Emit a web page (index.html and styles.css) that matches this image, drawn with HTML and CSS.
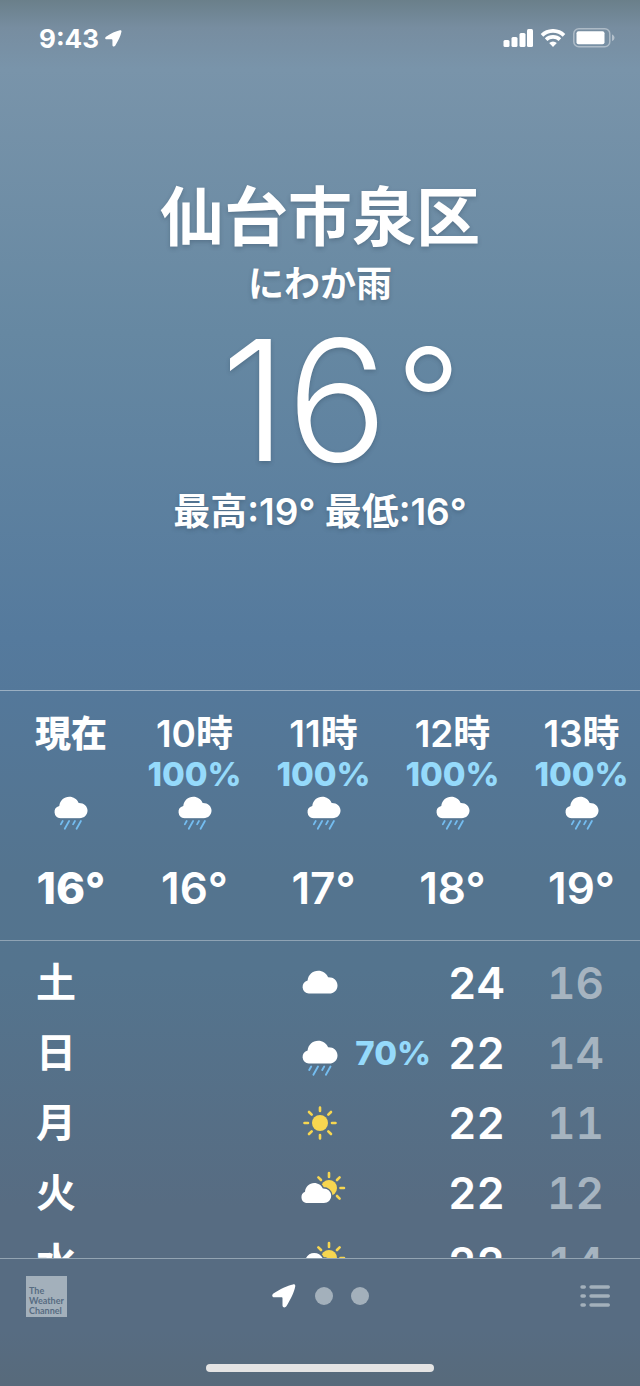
FILE: index.html
```html
<!DOCTYPE html>
<html lang="ja">
<head>
<meta charset="utf-8">
<meta name="viewport" content="width=device-width, initial-scale=1">
<title>天気</title>
<link rel="stylesheet" href="styles.css">
</head>
<body>
<svg class="sprite" aria-hidden="true">
  <symbol id="cloud" viewBox="0 0 36 24">
    <path d="M6.800 23.500A6.600 6.600 0 0 1 5.600 10.500C6.200 4.800 10.600.8 16.200.8c4.400 0 8.200 2.500 9.900 6.500 5.400-.2 9.400 3.400 9.400 8.100 0 4.700-3.600 8.100-8.300 8.100z" fill="#fff"/>
  </symbol>
  <symbol id="rain" viewBox="0 0 36 36">
    <use href="#cloud" width="36" height="24"/>
    <path d="M9.200 26.500l-2 3.500M16 26.500l-4.600 8.200M22.200 26.500l-2 3.500M28.500 26.500l-4.600 8.200" fill="none" stroke="#74bdf0" stroke-width="1.900" stroke-linecap="round"/>
  </symbol>
  <symbol id="sun" viewBox="0 0 36 36">
    <circle cx="18" cy="18" r="8" fill="#f7d650"/>
    <path d="M18 2.500v3.500M18 30v3.500M2.500 18h3.500M30 18h3.500M7 7l2.700 2.700M26.300 26.300l2.700 2.700M29 7l-2.700 2.700M9.700 26.300L7 29" fill="none" stroke="#f7d650" stroke-width="2.600" stroke-linecap="round"/>
  </symbol>
  <symbol id="partly" viewBox="0 0 46 34">
    <mask id="cut" maskUnits="userSpaceOnUse" x="0" y="0" width="46" height="34">
      <rect width="46" height="34" fill="#fff"/>
      <path d="M6 32A6 6 0 0 1 5 20.700C5.500 15.500 9.300 12 14.200 12c3.900 0 7.200 2.200 8.700 5.600 4.700-.2 8.300 3 8.300 7.200 0 4.100-3.200 7.200-7.300 7.200z" fill="#000" stroke="#000" stroke-width="3"/>
    </mask>
    <g mask="url(#cut)">
      <circle cx="29" cy="17" r="8" fill="#f7d650"/>
      <path d="M29 2v4M40.500 17H44M18.400 6.400l2.600 2.600M39.600 6.400L37 9M37 25l2.600 2.600" fill="none" stroke="#f7d650" stroke-width="2.600" stroke-linecap="round"/>
    </g>
    <path d="M6 32A6 6 0 0 1 5 20.700C5.500 15.500 9.300 12 14.200 12c3.900 0 7.200 2.200 8.700 5.600 4.700-.2 8.300 3 8.300 7.200 0 4.100-3.200 7.200-7.300 7.200z" fill="#fff"/>
  </symbol>
  <symbol id="arrow" viewBox="0 0 24 24">
    <path d="M21 .4c1.700-.4 2.600.6 2.200 2.200-1 5.600-4.600 13-8.800 19.700-1.100 1.800-3.900 1.300-3.900-.8V14.300c0-.8-.3-1.100-1.100-1.100H2.200C0 13.200-.5 10.700 1.400 9.500 8 5.200 15.400 1.500 21 .4z" fill="#fff"/>
  </symbol>
</svg>

<div class="app">
  <header class="status">
    <div class="status-time"><time>9:43</time><svg class="status-arrow" role="img" aria-label="位置情報"><use href="#arrow"/></svg></div>
    <div class="status-icons">
      <svg width="30" height="18" viewBox="0 0 30 18" fill="#fff" role="img" aria-label="電波">
        <rect x="0.500" y="11" width="6" height="7" rx="1.500"/><rect x="8.500" y="8" width="6" height="10" rx="1.500"/><rect x="16.500" y="4" width="6" height="14" rx="1.500"/><rect x="24" y="0" width="6" height="18" rx="1.500"/>
      </svg>
      <svg width="26" height="18" viewBox="0 0 26 18" role="img" aria-label="Wi-Fi">
        <path d="M2 6.300a15.800 15.800 0 0 1 22 0M6.100 10.600a9.900 9.900 0 0 1 13.800 0" fill="none" stroke="#fff" stroke-width="3.700"/>
        <path d="M9.200 14a5.500 5.500 0 0 1 7.600 0L13 18z" fill="#fff"/>
      </svg>
      <svg width="42" height="20" viewBox="0 0 42 20" role="img" aria-label="バッテリー">
        <rect x=".8" y=".8" width="36" height="18" rx="5" fill="none" stroke="#fff" stroke-opacity=".4" stroke-width="1.500"/>
        <rect x="3.500" y="3.300" width="28" height="13" rx="2" fill="#fff"/>
        <path d="M39 6.500c3.300 1.300 3.300 5.300 0 6.600z" fill="#fff" fill-opacity=".45"/>
      </svg>
    </div>
  </header>

  <main class="main">
    <section class="current">
      <h1 class="city">仙台市泉区</h1>
      <p class="condition">にわか雨</p>
      <p class="temperature"><span>16</span><span class="degree">°</span></p>
      <p class="range">最高:19° 最低:16°</p>
    </section>

    <ul class="hourly">
      <li class="hour hour-now"><span class="hour-label">現在</span><span class="chance"></span><svg class="hour-icon"><use href="#rain"/></svg><span class="hour-temp">16°</span></li>
      <li class="hour"><span class="hour-label">10時</span><span class="chance">100%</span><svg class="hour-icon"><use href="#rain"/></svg><span class="hour-temp">16°</span></li>
      <li class="hour"><span class="hour-label">11時</span><span class="chance">100%</span><svg class="hour-icon"><use href="#rain"/></svg><span class="hour-temp">17°</span></li>
      <li class="hour"><span class="hour-label">12時</span><span class="chance">100%</span><svg class="hour-icon"><use href="#rain"/></svg><span class="hour-temp">18°</span></li>
      <li class="hour"><span class="hour-label">13時</span><span class="chance">100%</span><svg class="hour-icon"><use href="#rain"/></svg><span class="hour-temp">19°</span></li>
    </ul>

    <div class="daily">
      <table class="days">
        <colgroup><col class="col-day"><col class="col-icon"><col class="col-chance"><col class="col-high"><col class="col-low"></colgroup>
        <tbody>
          <tr><th class="day" scope="row">土</th><td><svg class="icon-cloud" role="img" aria-label="くもり"><use href="#cloud"/></svg></td><td class="chance"></td><td class="high">24</td><td class="low">16</td></tr>
          <tr><th class="day" scope="row">日</th><td><svg class="icon-rain" role="img" aria-label="雨"><use href="#rain"/></svg></td><td class="chance">70%</td><td class="high">22</td><td class="low">14</td></tr>
          <tr><th class="day" scope="row">月</th><td><svg class="icon-sun" role="img" aria-label="晴れ"><use href="#sun"/></svg></td><td class="chance"></td><td class="high">22</td><td class="low">11</td></tr>
          <tr><th class="day" scope="row">火</th><td><svg class="icon-partly" role="img" aria-label="晴れ時々くもり"><use href="#partly"/></svg></td><td class="chance"></td><td class="high">22</td><td class="low">12</td></tr>
          <tr><th class="day" scope="row">水</th><td><svg class="icon-partly" role="img" aria-label="晴れ時々くもり"><use href="#partly"/></svg></td><td class="chance"></td><td class="high">22</td><td class="low">14</td></tr>
        </tbody>
      </table>
    </div>
  </main>

  <footer class="footer">
    <div class="toolbar">
      <a class="provider" href="#">The<br>Weather<br>Channel</a>
      <nav class="pages" aria-label="地点">
        <button class="page page-current" type="button" aria-label="現在地"><svg class="page-arrow"><use href="#arrow"/></svg></button>
        <button class="page" type="button" aria-label="地点2"><span class="dot"></span></button>
        <button class="page" type="button" aria-label="地点3"><span class="dot"></span></button>
      </nav>
      <button class="list-button" type="button" aria-label="リスト">
        <svg width="30" height="24" viewBox="0 0 30 24" fill="none" stroke="#a3b0bb" stroke-width="3.400" stroke-linecap="round"><path d="M2 3h2.300M11 3h17.300M2 12h2.300M11 12h17.300M2 21h2.300M11 21h17.300"/></svg>
      </button>
    </div>
    <div class="home-bar"></div>
  </footer>
</div>
</body>
</html>
```
FILE: styles.css
```css
* { box-sizing: border-box; }

body {
  margin: 0;
  color: #fff;
  font-family: Inter, "Noto Sans CJK JP", sans-serif;
}

h1, p, ul { margin: 0; padding: 0; }
ul { list-style: none; }

button {
  padding: 0;
  border: 0;
  background: none;
  color: inherit;
}

.sprite { position: absolute; width: 0; height: 0; }

.app {
  display: flex;
  flex-direction: column;
  height: 100vh;
  overflow: hidden;
  background: linear-gradient(#6a7f8a 0%, #778da0 2%, #7994aa 5%, #6688a2 24%, #557a9d 46%, #54789a 50%, #54748f 63%, #54748e 70%, #576c82 87%, #576c82 96%, #576a7b 100%);
}

.status {
  display: flex;
  justify-content: space-between;
  align-items: center;
  height: 76px;
  padding: 0 25px 0 39px;
}

.status-time {
  display: flex;
  align-items: center;
  gap: 6px;
  font-size: 26px;
  font-weight: 700;
}

.status-arrow { width: 17px; height: 17px; }
.status-icons { display: flex; align-items: center; gap: 7px; }

.main {
  display: flex;
  flex: 1;
  flex-direction: column;
  min-height: 0;
}

.current {
  display: flex;
  flex-direction: column;
  align-items: center;
  padding: 101px 0 155px;
  text-shadow: 0 2px 4px rgba(40, 60, 80, 0.3);
}

.city { font-size: 64px; font-weight: 600; line-height: 80px; }
.condition { font-size: 36px; font-weight: 600; line-height: 54px; }

.temperature {
  display: flex;
  gap: 8px;
  padding-left: 42px;
  font-size: 168px;
  font-weight: 300;
  line-height: 178px;
}

.degree { font-size: 144px; }

.range { font-size: 37px; font-weight: 600; line-height: 46px; }

.hourly {
  display: flex;
  flex: none;
  overflow: hidden;
  padding: 24px 0 28px 12px;
  border-top: 1px solid #9aafc2;
  border-bottom: 1px solid #8fa3b4;
}

.hour {
  display: flex;
  flex: 0 0 129px;
  flex-direction: column;
  align-items: center;
}

.hour-label { font-size: 37px; font-weight: 600; line-height: 38px; }

.chance {
  color: #95dafb;
  font-size: 33px;
  font-weight: 800;
}

.hour .chance { height: 42px; line-height: 42px; }
.hour-icon { width: 34px; height: 34px; margin: 1px 0 34px; }
.hour-temp { font-size: 44px; font-weight: 600; line-height: 48px; }
.hour-now { flex-basis: 118px; }
.hour-now .hour-label { font-size: 36px; font-weight: 800; }
.hour-now .hour-temp { font-weight: 800; }

.daily {
  flex: 1;
  min-height: 0;
  overflow: hidden;
  padding: 7px 36px 0;
}

.days {
  width: 100%;
  border-collapse: collapse;
  table-layout: fixed;
}

.col-icon { width: 50px; }
.col-chance { width: 81px; }
.col-high { width: 74px; }
.col-low { width: 99px; }

.days tr { height: 70px; }
.days th, .days td { padding: 0; vertical-align: middle; }
.days svg { display: block; }
.days .chance { text-align: right; }

.day {
  font-size: 40px;
  font-weight: 600;
  line-height: 60px;
  text-align: left;
}

.high, .low {
  font-size: 44px;
  font-variant-numeric: tabular-nums;
  font-weight: 600;
  line-height: 60px;
  text-align: right;
}

.low { color: #a6b4c0; }

.icon-cloud { width: 36px; height: 24px; margin: 0 0 3px 2px; }
.icon-rain { width: 36px; height: 36px; margin: 9px 0 0 2px; }
.icon-sun { width: 36px; height: 36px; margin-left: 2px; }
.icon-partly { width: 46px; height: 34px; margin-bottom: 10px; }

.footer {
  flex: none;
  padding: 16px 26px 14px;
  border-top: 1px solid #93a4b2;
}

.toolbar {
  display: grid;
  grid-template-columns: 1fr auto 1fr;
  align-items: center;
  height: 42px;
  margin-bottom: 47px;
}

.provider {
  width: 41px;
  height: 41px;
  padding: 10px 0 0 3px;
  background: #a3b0bb;
  color: #576c82;
  font-family: Lato, sans-serif;
  font-size: 9px;
  font-weight: 700;
  line-height: 10px;
  text-decoration: none;
}

.pages { display: flex; align-items: center; }
.page { display: grid; place-items: center; width: 36px; height: 36px; }
.page-current { width: 44px; }
.page-arrow { width: 24px; height: 24px; }

.dot {
  width: 18px;
  height: 18px;
  border-radius: 50%;
  background: #a3b0bb;
}

.list-button { justify-self: end; margin-right: 4px; }
.list-button svg { display: block; }

.home-bar {
  width: 36%;
  min-width: 228px;
  height: 8px;
  margin: 0 auto;
  border-radius: 4px;
  background: #e4e4e4;
}
```
